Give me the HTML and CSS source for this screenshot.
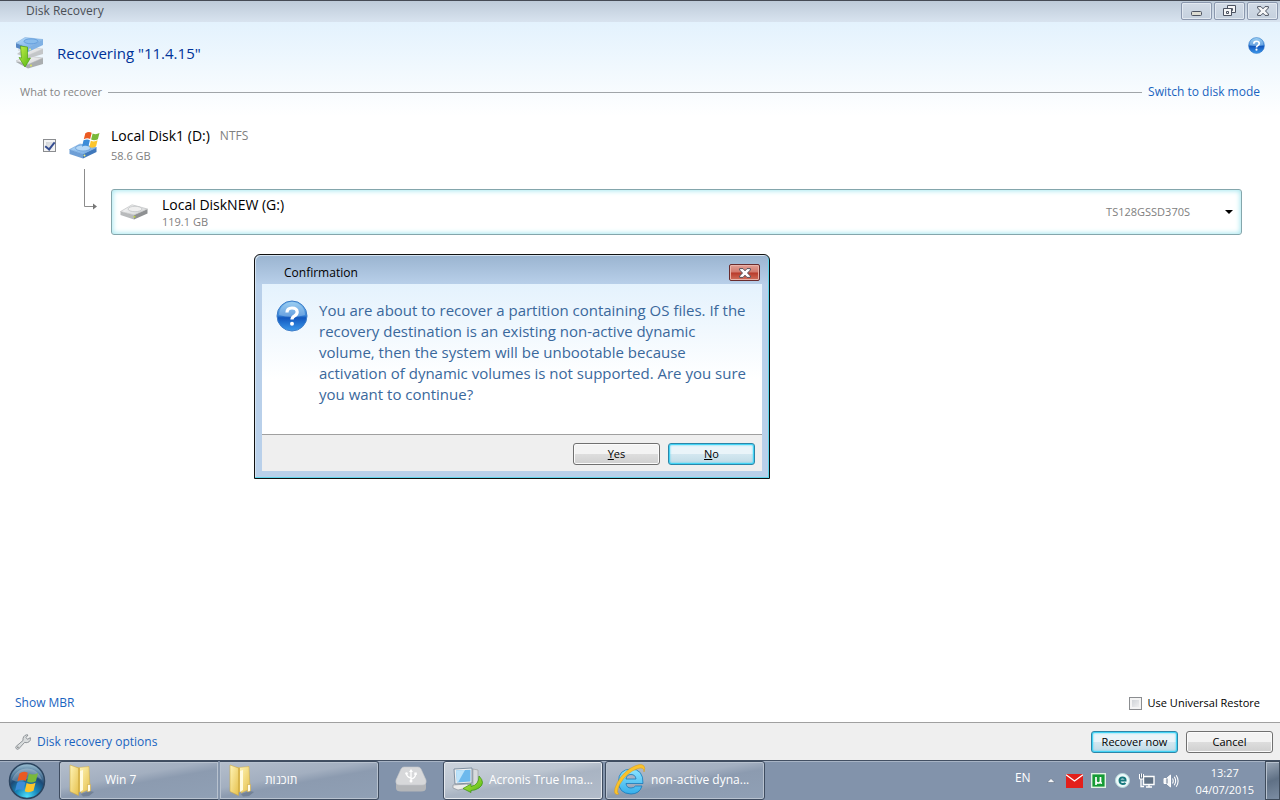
FILE: index.html
```html
<!DOCTYPE html>
<html lang="en">
<head>
<meta charset="utf-8">
<title>Disk Recovery</title>
<link rel="stylesheet" href="styles.css">
</head>
<body>
<svg class="defs" width="0" height="0" aria-hidden="true">
  <defs>
    <linearGradient id="ball" x1="0" y1="0" x2="0" y2="1"><stop offset="0" stop-color="#7cc0ee"/><stop offset=".48" stop-color="#3a86d8"/><stop offset=".56" stop-color="#1257be"/><stop offset="1" stop-color="#3c9aec"/></linearGradient>
    <linearGradient id="blueTop" x1="0" y1="0" x2="1" y2="1"><stop offset="0" stop-color="#b9dcf8"/><stop offset="1" stop-color="#6ba6e4"/></linearGradient>
    <linearGradient id="greyTop" x1="0" y1="0" x2="1" y2="1"><stop offset="0" stop-color="#fdfdfd"/><stop offset="1" stop-color="#d0d2d4"/></linearGradient>
    <linearGradient id="green" x1="0" y1="0" x2="1" y2="1"><stop offset="0" stop-color="#c8f04a"/><stop offset="1" stop-color="#4fb512"/></linearGradient>
    <linearGradient id="folder" x1="0" y1="0" x2="1" y2="1"><stop offset="0" stop-color="#fff5b8"/><stop offset="1" stop-color="#e6c04c"/></linearGradient>
    <radialGradient id="orb" cx=".5" cy=".95" r=".9"><stop offset="0" stop-color="#4fe0fa"/><stop offset=".35" stop-color="#1788bb"/><stop offset=".65" stop-color="#1d4a76"/><stop offset="1" stop-color="#8fb4ca"/></radialGradient>
    <linearGradient id="ie" x1="0" y1="0" x2="0" y2="1"><stop offset="0" stop-color="#8be4ff"/><stop offset="1" stop-color="#36aeea"/></linearGradient>
    <symbol id="flag" viewBox="0 0 20 20">
      <path d="M3.5 3.5Q7 1 10.2 3L8.6 9.6Q5.5 7.8 1.9 9.8z" fill="#ea5a22"/>
      <path d="M11.2 3.6Q14.5 5.4 18.4 3.2L16.7 9.8Q13 11.8 9.6 10z" fill="#79b93a"/>
      <path d="M1.6 10.9Q5.3 9 8.3 10.7L6.8 17.2Q3.5 15.5 0 17.5z" fill="#3c8cd8"/>
      <path d="M9.3 11.2Q12.7 13 16.4 10.9L14.8 17.4Q11 19.5 7.8 17.8z" fill="#fcc52c"/>
    </symbol>
    <symbol id="question" viewBox="0 0 32 32">
      <circle cx="16" cy="16" r="15" fill="url(#ball)" stroke="#3d7cc8"/>
      <path d="M3 15A13 13 0 0 1 29 15Q23 17 16 17T3 15z" fill="#fff" opacity=".25"/>
      <path d="M11 12.5Q11 8 16 8T21.2 12Q21.2 14.4 18.6 15.8Q16 17.2 16 19.6" fill="none" stroke="#fff" stroke-width="3.2"/>
      <circle cx="16" cy="23.8" r="2" fill="#fff"/>
    </symbol>
    <symbol id="folderIcon" viewBox="0 0 28 34">
      <path d="M14 31l9-3 4 1-5 4-6 .5z" fill="#4d5d72" opacity=".4"/>
      <path d="M12 4.500L22 3.500L23 26L14 30z" fill="url(#folder)" stroke="#d2ae45" stroke-width=".5"/>
      <path d="M9 4l4 1v24l-4 1z" fill="#d9b64e"/>
      <path d="M13 8l3-1v20l-3 2z" fill="#fffadf"/>
      <path d="M3 2L11.500 5V32.500L3 28.500z" fill="url(#folder)" stroke="#cfab43" stroke-width=".6"/>
      <path d="M20.500 21.500h3v6.500l-3 1z" fill="#fffbe6" stroke="#cfa83a" stroke-width=".6"/>
    </symbol>
  </defs>
</svg>

<main class="window">
  <header class="titlebar">
    <span class="titlebar-text">Disk Recovery</span>
    <div class="caption-buttons">
      <button class="caption" aria-label="Minimize"><svg width="12" height="6" viewBox="0 0 12 6"><rect x=".5" y=".5" width="10" height="4" rx="1" fill="#dcdcd2" stroke="#4c5361"/></svg></button>
      <button class="caption" aria-label="Restore"><svg width="13" height="12" viewBox="0 0 13 12"><g fill="#f5f6f7" stroke="#4c5361"><path d="M4.500.5h8v7h-8z"/><path d="M7.500 3.500h2v2h-2z"/><path d="M.5 3.500h8v7h-8z"/><path d="M3.500 6.500h2v2h-2z"/></g></svg></button>
      <button class="caption" aria-label="Close"><svg width="12" height="10" viewBox="0 0 12 10"><path d="M.6.6H4L6 2.800L8 .6H11.400V2L8.500 5L11.400 8V9.400H8L6 7.200L4 9.400H.6V8L3.500 5L.6 2z" fill="#f5f6f7" stroke="#4c5361"/></svg></button>
    </div>
  </header>

  <section class="content">
    <div class="heading">
      <svg width="30" height="34" viewBox="0 0 30 34" aria-hidden="true">
        <path d="M1 26L13 32.500L28 28V22L13 24z" fill="#a9adaf"/>
        <path d="M1 25L12 20L28 22L13 28.500z" fill="url(#greyTop)" stroke="#b0b2b5" stroke-width=".5"/>
        <path d="M2 18L13 22.500L28 18V13L10 12z" fill="#c3c6c8"/>
        <path d="M3 14L12 11L28 13L14 19z" fill="url(#greyTop)" stroke="#c6c8ca" stroke-width=".5"/>
        <path d="M1 7L13 11.500V16L1 11.500z" fill="#5688c4"/>
        <path d="M13 11.500L28 3.500V9L13 16z" fill="#7fb1e4"/>
        <path d="M1 7L10 1.500L28 3.500L13 11.500z" fill="url(#blueTop)" stroke="#78a9da" stroke-width=".5"/>
        <ellipse cx="16" cy="5.300" rx="7" ry="2.500" fill="#89bcec" stroke="#5794d5" stroke-width=".7"/>
        <path d="M5.500 10L12.500 11V22.500L15.500 22L10 31L4 21.500L6.500 22z" fill="url(#green)" stroke="#4da013" stroke-width=".7"/>
        <circle cx="15" cy="13.500" r="1" fill="#f4ee8c"/><circle cx="16" cy="29.500" r="1" fill="#d9e65c"/>
      </svg>
      <h1>Recovering "11.4.15"</h1>
      <button class="help" aria-label="Help"><svg width="17" height="17"><use href="#question"/></svg></button>
    </div>

    <div class="section-row">
      <h2>What to recover</h2>
      <span class="rule"></span>
      <a href="#disk-mode">Switch to disk mode</a>
    </div>

    <div class="source">
      <input type="checkbox" id="source-disk" class="tick" checked>
      <svg width="32" height="28" viewBox="0 0 32 28" aria-hidden="true">
        <path d="M.5 18.500L14 23V27.500L.5 23z" fill="#6e9fd6"/>
        <path d="M14 23L27.500 16.500V21L14 27.500z" fill="#4078bb"/>
        <path d="M.5 18.500L11 13L27.500 16.500L14 23z" fill="url(#blueTop)" stroke="#6a9fd8" stroke-width=".6"/>
        <ellipse cx="14" cy="17" rx="7.500" ry="3" fill="#b5d8f7" stroke="#6499d2" stroke-width=".7"/>
        <circle cx="15.500" cy="24.500" r="1" fill="#f0f07c"/>
        <use href="#flag" x="13" y="-1" width="19" height="19"/>
      </svg>
      <label class="source-info" for="source-disk">
        <span class="name-line"><span class="disk-name">Local Disk1 (D:)</span><span class="detail">NTFS</span></span>
        <span class="detail small">58.6 GB</span>
      </label>
    </div>

    <div class="target">
      <svg class="connector" width="13" height="42" viewBox="0 0 13 42" aria-hidden="true"><path d="M.5 0V37.500H9" fill="none" stroke="#8c8c8c"/><path d="M9 34.500l4 3-4 3z" fill="#777"/></svg>
      <button class="target-box" aria-haspopup="listbox" aria-label="Recovery destination: Local DiskNEW (G:), 119.1 GB, TS128GSSD370S">
        <svg width="28" height="16" viewBox="0 0 28 16" aria-hidden="true">
          <path d="M.5 7.500L14 11V15.500L.5 11z" fill="#b8babc"/><path d="M14 11L27.500 5V9.500L14 15.500z" fill="#8e9092"/>
          <path d="M.5 7.500L12 .8L27.500 5L14 11z" fill="url(#greyTop)" stroke="#b5b7b9" stroke-width=".6"/>
          <ellipse cx="15" cy="5" rx="7" ry="2.700" fill="#efefef" stroke="#bcbec0" stroke-width=".7"/><circle cx="14.500" cy="12.800" r="1" fill="#c0d63d"/>
        </svg>
        <span class="target-info"><span class="disk-name">Local DiskNEW (G:)</span><span class="detail small">119.1 GB</span></span>
        <span class="detail small model">TS128GSSD370S</span>
        <svg width="8" height="4" viewBox="0 0 8 4" aria-hidden="true"><path d="M0 0h8L4 4z" fill="#000"/></svg>
      </button>
    </div>

    <div class="content-foot">
      <a href="#mbr">Show MBR</a>
      <label class="universal small"><input type="checkbox" class="tick">Use Universal Restore</label>
    </div>
  </section>

  <footer class="actions">
    <a class="options" href="#options">
      <svg width="16" height="16" viewBox="0 0 16 16" aria-hidden="true"><path d="M1.200 12.300L8 6.500Q7.500 2 11.500.8L13 1L11 3.500L12.500 5.300L15.300 3.700Q16 7.500 12.500 8.500Q11 9 9.700 8.300L3.600 15Q2.200 15.800 1.200 14.600T1.200 12.300z" fill="#d9dcdd" stroke="#858a8e" stroke-width=".9"/><circle cx="2.900" cy="13.200" r=".8" fill="#777"/></svg>
      Disk recovery options
    </a>
    <button class="btn btn-default">Recover now</button>
    <button class="btn">Cancel</button>
  </footer>

  <section class="dialog" role="dialog" aria-labelledby="dialog-title">
    <header class="dialog-bar">
      <h2 id="dialog-title">Confirmation</h2>
      <button class="dialog-close" aria-label="Close"><svg width="12" height="10" viewBox="0 0 12 10"><path d="M.6.6H4L6 2.800L8 .6H11.400V2L8.500 5L11.400 8V9.400H8L6 7.200L4 9.400H.6V8L3.500 5L.6 2z" fill="#fff" stroke="#54515a"/></svg></button>
    </header>
    <div class="dialog-body">
      <svg width="32" height="32" aria-hidden="true"><use href="#question"/></svg>
      <p>You are about to recover a partition containing OS files. If the<br>recovery destination is an existing non-active dynamic<br>volume, then the system will be unbootable because<br>activation of dynamic volumes is not supported. Are you sure<br>you want to continue?</p>
    </div>
    <div class="dialog-actions">
      <button class="btn"><u>Y</u>es</button>
      <button class="btn btn-default"><u>N</u>o</button>
    </div>
  </section>
</main>

<nav class="taskbar">
  <button class="start" aria-label="Start"><svg width="38" height="38" viewBox="0 0 38 38"><circle cx="19" cy="19" r="17.500" fill="url(#orb)" stroke="#2c4560" stroke-width="1.500"/><path d="M4 18A15.500 15.500 0 0 1 34 18Q27 12 19 17T4 18z" fill="#fff" opacity=".25"/><use href="#flag" x="7" y="7" width="25" height="25"/></svg></button>
  <div class="task-group">
    <button class="task"><svg width="28" height="34"><use href="#folderIcon"/></svg><span>Win 7</span></button>
    <button class="task"><svg width="28" height="34"><use href="#folderIcon"/></svg><span lang="he">תוכנות</span></button>
  </div>
  <button class="pinned" aria-label="USB device"><svg width="32" height="27" viewBox="0 0 32 27">
    <path d="M1 16V22Q1 25.500 6 25.500H26Q31 25.500 31 22V16z" fill="#b4b6b9"/><path d="M9 1H23Q25 1 26 3L31 14Q32 19 27 19H5Q0 19 1 14L6 3Q7 1 9 1z" fill="#d7d8da" stroke="#c4c6c9" stroke-width=".6"/>
    <g stroke="#fff" fill="none" stroke-width="1.300"><path d="M16 15V5M16 12Q11.500 11 11.500 7.500M16 13Q20.500 12 20.500 8.500"/></g><path d="M14 6l2-3 2 3z" fill="#fff"/><circle cx="11.500" cy="7.500" r="1.300" fill="#fff"/><rect x="19.300" y="6.500" width="2.500" height="2.500" fill="#fff"/><circle cx="16" cy="15" r="1.500" fill="#fff"/>
  </svg></button>
  <button class="task task-active"><svg width="34" height="26" viewBox="0 0 34 26">
    <path d="M22 2l5 1v18h-5z" fill="#d7dadd" stroke="#999" stroke-width=".6"/><path d="M3 2L21 1V16L4 17z" fill="#eee" stroke="#687c90" stroke-width=".8"/><path d="M5 3.500L19.500 2.800V14.500L6 15.500z" fill="#6db9ed"/><path d="M5 3.500L14 3L7 15.400L6 15.500z" fill="#bce3fa"/><path d="M2 18l14-1 5 3-14 3-5-2z" fill="#ececec" stroke="#8c9299" stroke-width=".7"/><path d="M28 9Q35 16 28 21Q24 23.500 20 23.500V25.500L12 21.500L20 17V19.500Q28 18 28 9z" fill="url(#green)" stroke="#37920f" stroke-width=".7"/>
  </svg><span>Acronis True Ima...</span></button>
  <button class="task"><svg width="34" height="34" viewBox="0 0 34 34">
    <path d="M30 20.500H13Q13.500 25 18 25Q21 25 22.500 23H29Q26.500 31 18 31Q5.500 30.500 5.500 18.500T18 6Q30.500 6 30 20.500zM13 16H23Q22.500 11.500 18 11.500T13 16z" fill="url(#ie)" fill-rule="evenodd" stroke="#1779b9" stroke-width=".8"/>
    <path d="M6 31Q0 33 2 25Q6 13 17 5.500Q28-1 31 3Q32.500 5 31 9Q31 3.500 25 5.500Q14 9 7 21Q2.500 29.500 6 31z" fill="#fac22b" stroke="#d79a16" stroke-width=".5"/>
  </svg><span>non-active dyna...</span></button>

  <div class="tray">
    <span class="lang">EN</span>
    <button class="tray-icon" aria-label="Show hidden icons"><svg width="8" height="5" viewBox="0 0 8 5"><path d="M0 4.500L4 .5L8 4.500z" fill="#f4f5f7" stroke="#536277" stroke-width=".5"/></svg></button>
    <button class="tray-icon" aria-label="Mail"><svg width="17" height="14" viewBox="0 0 17 14"><path d="M0 0h17v14H0z" fill="#e31f1b"/><path d="M0 .7L8.500 7L17 .7" fill="none" stroke="#fff" stroke-width="1.300"/></svg></button>
    <button class="tray-icon" aria-label="Torrent client"><svg width="15" height="15" viewBox="0 0 15 15"><rect x=".7" y=".7" width="13.600" height="13.600" fill="#159b35" stroke="#e2f3e5" stroke-width="1.400"/><path d="M5 12V4M5 8Q5 10 7.200 10T9.500 8V4M9.500 8V9.500Q9.700 10.200 11 10" fill="none" stroke="#fff" stroke-width="1.700"/></svg></button>
    <button class="tray-icon" aria-label="Antivirus"><svg width="15" height="15" viewBox="0 0 15 15"><circle cx="7.500" cy="7.500" r="7" fill="#eefafa" stroke="#b7d9dc"/><path d="M4.500 7.500H10.600Q10.700 4.500 7.500 4.500T4.500 7.800Q4.700 11 7.700 11Q9.500 11 10.500 10" fill="none" stroke="#16787d" stroke-width="1.900"/></svg></button>
    <button class="tray-icon" aria-label="Network"><svg width="16" height="15" viewBox="0 0 16 15"><path d="M4.500 3.500h10.500v8H4.500z" fill="#617285" stroke="#fff" stroke-width="1.400"/><path d="M7 14h6M10 12v2M2 6v7.500h3" fill="none" stroke="#fff" stroke-width="1.300"/><path d="M.5 1v5h4V1M2.500.5v4" fill="#627387" stroke="#fff"/></svg></button>
    <button class="tray-icon" aria-label="Volume"><svg width="16" height="14" viewBox="0 0 16 14"><path d="M1 4.500h2.500L7.500 1v12L3.500 9.500H1z" fill="#f5f6f8" stroke="#fff"/><path d="M4 4.500v5" stroke="#63758c"/><path d="M9.500 4.500Q11 7 9.500 9.500M11.300 2.800Q14 7 11.300 11.200M13.200 1.200Q17 7 13.200 12.800" fill="none" stroke="#fff" stroke-width="1.100"/></svg></button>
    <time class="clock small" datetime="2015-07-04T13:27">13:27<br>04/07/2015</time>
    <button class="show-desktop" aria-label="Show desktop"></button>
  </div>
</nav>
</body>
</html>
```
FILE: styles.css
```css
* { box-sizing: border-box; }

body {
  margin: 0;
  min-height: 100vh;
  display: flex;
  flex-direction: column;
  background: #fff;
  color: #000;
  font: 12px/16px "Open Sans", "Noto Sans", sans-serif;
}

button { font: inherit; color: inherit; padding: 0; border: 0; background: none; }
h1, h2, p { margin: 0; font-weight: 400; }
h2 { font-size: 12px; }
a { color: #1a64c0; text-decoration: none; }
svg { flex: none; display: block; }
.defs { position: absolute; }
.small { font-size: 11px; }

.window { position: relative; flex: 1; display: flex; flex-direction: column; }

.titlebar {
  height: 22px;
  display: flex;
  justify-content: space-between;
  padding-left: 26px;
  border-top: 1px solid #464b55;
  background: linear-gradient(#becbd9, #d8e3ef);
  color: #4a4f56;
}
.titlebar-text { line-height: 20px; }
.caption-buttons { display: flex; gap: 2px; padding: 1px 2px 2px 0; }
.caption {
  width: 31px;
  display: grid;
  place-items: center;
  border: 1px solid #8b98ae;
  border-radius: 2px;
  background: linear-gradient(#d2dbe6, #c5d1de);
  box-shadow: inset 0 0 0 1px #e2e9f1;
}
.caption:first-child { padding-top: 5px; }

.content {
  flex: 1;
  display: flex;
  flex-direction: column;
  background: linear-gradient(#e3f2fd, #fff 94px);
}
.heading { display: flex; align-items: center; gap: 12px; padding: 14px 15px 0; }
.heading h1 { flex: 1; color: #003399; font-size: 15px; line-height: 24px; }
.help { margin-top: -16px; }

.section-row { display: flex; align-items: center; gap: 6px; padding: 14px 20px 0; }
.section-row h2 { color: #858585; font-size: 11px; }
.rule { flex: 1; border-top: 1px solid #a0a5a9; }

.source { display: flex; align-items: center; gap: 12px; padding: 26px 20px 0 43px; }
.source .tick { margin-right: 1px; }
.source-info { display: flex; flex-direction: column; gap: 2px; margin-left: -2px; }
.name-line { display: flex; align-items: center; gap: 10px; }
.disk-name { font-size: 14px; line-height: 20px; }
.detail { color: #808080; }

.tick {
  appearance: none;
  width: 13px;
  height: 13px;
  margin: 0;
  border: 1px solid #8b8d90;
  background: linear-gradient(135deg, #c8ccd1, #f6f6f6);
  box-shadow: inset 0 0 0 2px #f4f4f4;
  display: grid;
  place-items: center;
}
.tick:checked::after {
  content: "";
  width: 4px;
  height: 8px;
  border: solid #354d90;
  border-width: 0 2px 2px 0;
  transform: rotate(38deg);
}

.target { display: flex; gap: 14px; padding: 5px 38px 0 84px; }
.target-box {
  flex: 1;
  min-height: 46px;
  margin-top: 20px;
  display: flex;
  align-items: center;
  padding: 0 8px;
  text-align: left;
  border: 1px solid #84a6ac;
  border-radius: 3px;
  background: #fff;
  box-shadow: inset 0 0 5px 1px #a8e8f0;
}
.target-info { flex: 1; display: flex; flex-direction: column; margin-left: 14px; }
.target-info .detail { line-height: 14px; }
.model { margin-right: 35px; }

.content-foot {
  flex: 1;
  display: flex;
  justify-content: space-between;
  align-items: flex-end;
  padding: 0 20px 11px 15px;
}
.universal { display: flex; align-items: center; gap: 6px; }

.actions {
  min-height: 38px;
  display: flex;
  align-items: center;
  gap: 8px;
  padding: 0 7px 0 15px;
  border-top: 1px solid #a0a0a0;
  background: #efefef;
}
.options { display: flex; align-items: center; gap: 6px; margin-right: auto; }

.btn {
  width: 87px;
  height: 22px;
  font-size: 11px;
  border: 1px solid #707070;
  border-radius: 3px;
  background: linear-gradient(#f3f3f3 0 48%, #dddddd 52%, #cfcfcf);
  box-shadow: inset 0 0 0 1px #fbfbfb;
}
.btn-default {
  border-color: #2c86a8;
  background: linear-gradient(#eaf4f9 0 48%, #d3e7f0 52%, #c0dae5);
  box-shadow: inset 0 0 0 1px #43d3f5, inset 0 0 2px 1px #43d3f5;
}

.dialog {
  position: absolute;
  left: 254px;
  top: 254px;
  width: 516px;
  padding: 0 7px 7px;
  border: 1px solid #111;
  border-radius: 6px 6px 0 0;
  background: linear-gradient(#9ab4d0, #b9d0ea 30px);
  box-shadow: inset -1px -1px #5fd6ec, inset 1px 1px #d5e3f0;
}
.dialog-bar {
  height: 29px;
  display: flex;
  align-items: center;
  justify-content: space-between;
  padding: 6px 2px 0 22px;
}
.dialog-close {
  width: 31px;
  height: 17px;
  display: grid;
  place-items: center;
  border: 1px solid #692c2e;
  border-radius: 2px;
  background: linear-gradient(#e2a096, #d1786c 48%, #b83a2a 52%, #d1705c);
  box-shadow: inset 0 0 0 1px #e9b3a9;
}
.dialog-body {
  min-height: 150px;
  display: flex;
  gap: 11px;
  padding: 16px 14px;
  background: linear-gradient(#e4f2fd, #fff 95px);
}
.dialog-body p { color: #3a689c; font-size: 15px; line-height: 21px; }
.dialog-actions {
  min-height: 37px;
  display: flex;
  justify-content: flex-end;
  align-items: center;
  gap: 8px;
  padding: 1px 7px 0;
  border-top: 1px solid #a0a0a0;
  background: #efefef;
}

.taskbar {
  height: 40px;
  display: flex;
  border-top: 1px solid #424f62;
  background: #8293ab;
  box-shadow: inset 0 1px #a7b3c4;
  color: #fff;
}
.start { width: 59px; padding-left: 8px; }
.task-group { display: flex; border-radius: 3px; }
.task {
  width: 160px;
  display: flex;
  align-items: center;
  gap: 4px;
  padding: 0 8px 2px 7px;
  border: 1px solid #3e4c60;
  border-radius: 3px;
  background: linear-gradient(170deg, #b4becc 0, #a3afc0 40%, #8c9bb0 54%, #90a0b5);
  box-shadow: inset 0 0 0 1px #b8c2cf;
  white-space: nowrap;
}
.task-group .task { gap: 10px; }
.task-group .task:first-child { border-right-color: #8797ad; border-radius: 3px 0 0 3px; }
.task-group .task:last-child { border-left-color: #8797ad; border-radius: 0 3px 3px 0; }
.task-active { background: linear-gradient(170deg, #ccd3dc 0, #bcc5d0 40%, #a9b4c3 54%, #b2bcca); box-shadow: inset 0 0 0 1px #e4e8ed; }
.task-active + .task { margin-left: 2px; }
.pinned { width: 64px; display: grid; place-items: center; padding-bottom: 3px; }

.tray { margin-left: auto; display: flex; align-items: center; }
.lang { margin-right: 15px; margin-bottom: 5px; }
.tray-icon { min-width: 24px; display: grid; place-items: center; }
.tray-icon:first-of-type { min-width: 10px; margin-right: 7px; }
.clock { margin-left: 13px; line-height: 17px; text-align: center; }
.show-desktop {
  width: 15px;
  align-self: stretch;
  margin-left: 11px;
  border: 1px solid #3f4c5c;
  background: linear-gradient(160deg, #9aa7b7, #5f7085 50%, #7c8da3);
  box-shadow: inset 1px 1px #b7c1ce;
}
```
